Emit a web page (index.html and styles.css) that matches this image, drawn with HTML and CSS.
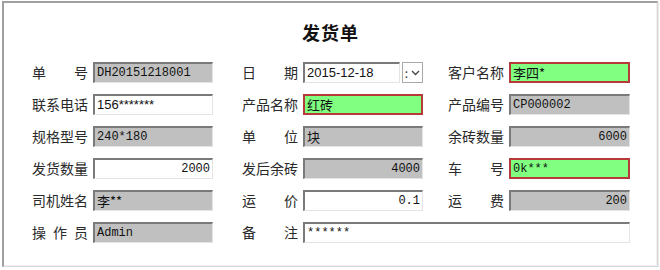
FILE: index.html
```html
<!DOCTYPE html>
<html>
<head>
	<meta charset="utf-8">
	<title>发货单</title>
	<link rel="stylesheet" href="styles.css">
</head>
<body>
	<div class="frame">
		<h1 class="title">发货单</h1>
		<div class="form">
			<div class="field"><label class="spread">单号</label><div class="box gray mono">DH20151218001</div></div>
			<div class="field"><label class="spread">日期</label>
				<div class="date">
					<div class="box sans">2015-12-18</div>
					<div class="drop"><span>:</span><svg width="9" height="6" viewBox="0 0 9 6"><path d="M1 1 L4.5 4.5 L8 1" fill="none" stroke="#444" stroke-width="1.3"/></svg></div>
				</div>
			</div>
			<div class="field"><label>客户名称</label><div class="box green cjk">李四*</div></div>

			<div class="field"><label>联系电话</label><div class="box sans">156*******</div></div>
			<div class="field"><label>产品名称</label><div class="box green cjk">红砖</div></div>
			<div class="field"><label>产品编号</label><div class="box gray mono">CP000002</div></div>

			<div class="field"><label>规格型号</label><div class="box gray mono">240*180</div></div>
			<div class="field"><label class="spread">单位</label><div class="box gray cjk">块</div></div>
			<div class="field"><label>余砖数量</label><div class="box gray mono num">6000</div></div>

			<div class="field"><label>发货数量</label><div class="box mono num">2000</div></div>
			<div class="field"><label>发后余砖</label><div class="box gray mono num">4000</div></div>
			<div class="field"><label class="spread">车号</label><div class="box green mono">0k***</div></div>

			<div class="field"><label>司机姓名</label><div class="box gray cjk">李**</div></div>
			<div class="field"><label class="spread">运价</label><div class="box mono num">0.1</div></div>
			<div class="field"><label class="spread">运费</label><div class="box gray mono num">200</div></div>

			<div class="field"><label class="spread">操作员</label><div class="box gray mono">Admin</div></div>
			<div class="field wide"><label class="spread">备注</label><div class="box mono">******</div></div>
		</div>
	</div>
</body>
</html>
```

FILE: styles.css
```css
body{
	margin: 0;
	padding: 0;
	background: #fff;
	font-family: "Noto Sans CJK SC", "Liberation Sans", sans-serif;
}
.frame{
	margin: 1px 0 0 2px;
	width: 653px;
	height: 263px;
	border-top: 2px solid #a0a0a0;
	border-left: 2px solid #a0a0a0;
	border-right: 1px solid #d8d8d8;
	border-bottom: 1px solid #d8d8d8;
	box-shadow: inset -1px -1px 0 #f0f0f0, 1px 1px 0 #e8e8e8;
}
.title{
	margin: 18px 0 0 0;
	text-align: center;
	font-size: 18px;
	line-height: 22px;
	font-weight: bold;
	color: #111;
	letter-spacing: 1px;
}
.form{
	display: grid;
	grid-template-columns: 181px 185px 182px;
	column-gap: 25px;
	row-gap: 11px;
	margin: 19px 0 0 28px;
}
.field{
	display: flex;
	align-items: center;
	gap: 5px;
	height: 21px;
}
/* middle column sits a little further right */
.field:nth-child(3n+2){
	margin-left: 4px;
}
.field.wide{
	grid-column: 2 / 4;
}
label{
	width: 56px;
	flex: none;
	font-size: 14px;
	line-height: 21px;
	color: #2a2a2a;
	white-space: nowrap;
}
label.spread{
	text-align: justify;
	text-align-last: justify;
}
.box{
	flex: 1;
	height: 21px;
	box-sizing: border-box;
	padding: 0 2px;
	background: #fff;
	border-top: 2px solid #7a7a7a;
	border-left: 2px solid #7a7a7a;
	border-right: 1px solid #e4e4e4;
	border-bottom: 1px solid #e4e4e4;
	font-size: 12px;
	line-height: 18px;
	color: #111;
	white-space: nowrap;
	overflow: hidden;
}
.box.gray{
	background: #c0c0c0;
}
.box.green{
	background: #80ff80;
	border: 2px solid #b63a3a;
}
.mono{
	font-family: "Liberation Mono", monospace;
}
.sans{
	font-family: "Liberation Sans", sans-serif;
	font-size: 13px;
}
.cjk{
	font-family: "Noto Sans CJK SC", sans-serif;
	font-size: 13px;
	line-height: 17px;
}
.num{
	text-align: right;
}
.date{
	flex: 1;
	display: flex;
	gap: 2px;
	height: 21px;
}
.date .box{
	flex: 1;
}
.drop{
	width: 21px;
	flex: none;
	box-sizing: border-box;
	border: 1px solid #a8a8a8;
	background: #fff;
	display: flex;
	align-items: center;
	justify-content: center;
	gap: 3px;
	font-size: 12px;
	color: #333;
}
```
